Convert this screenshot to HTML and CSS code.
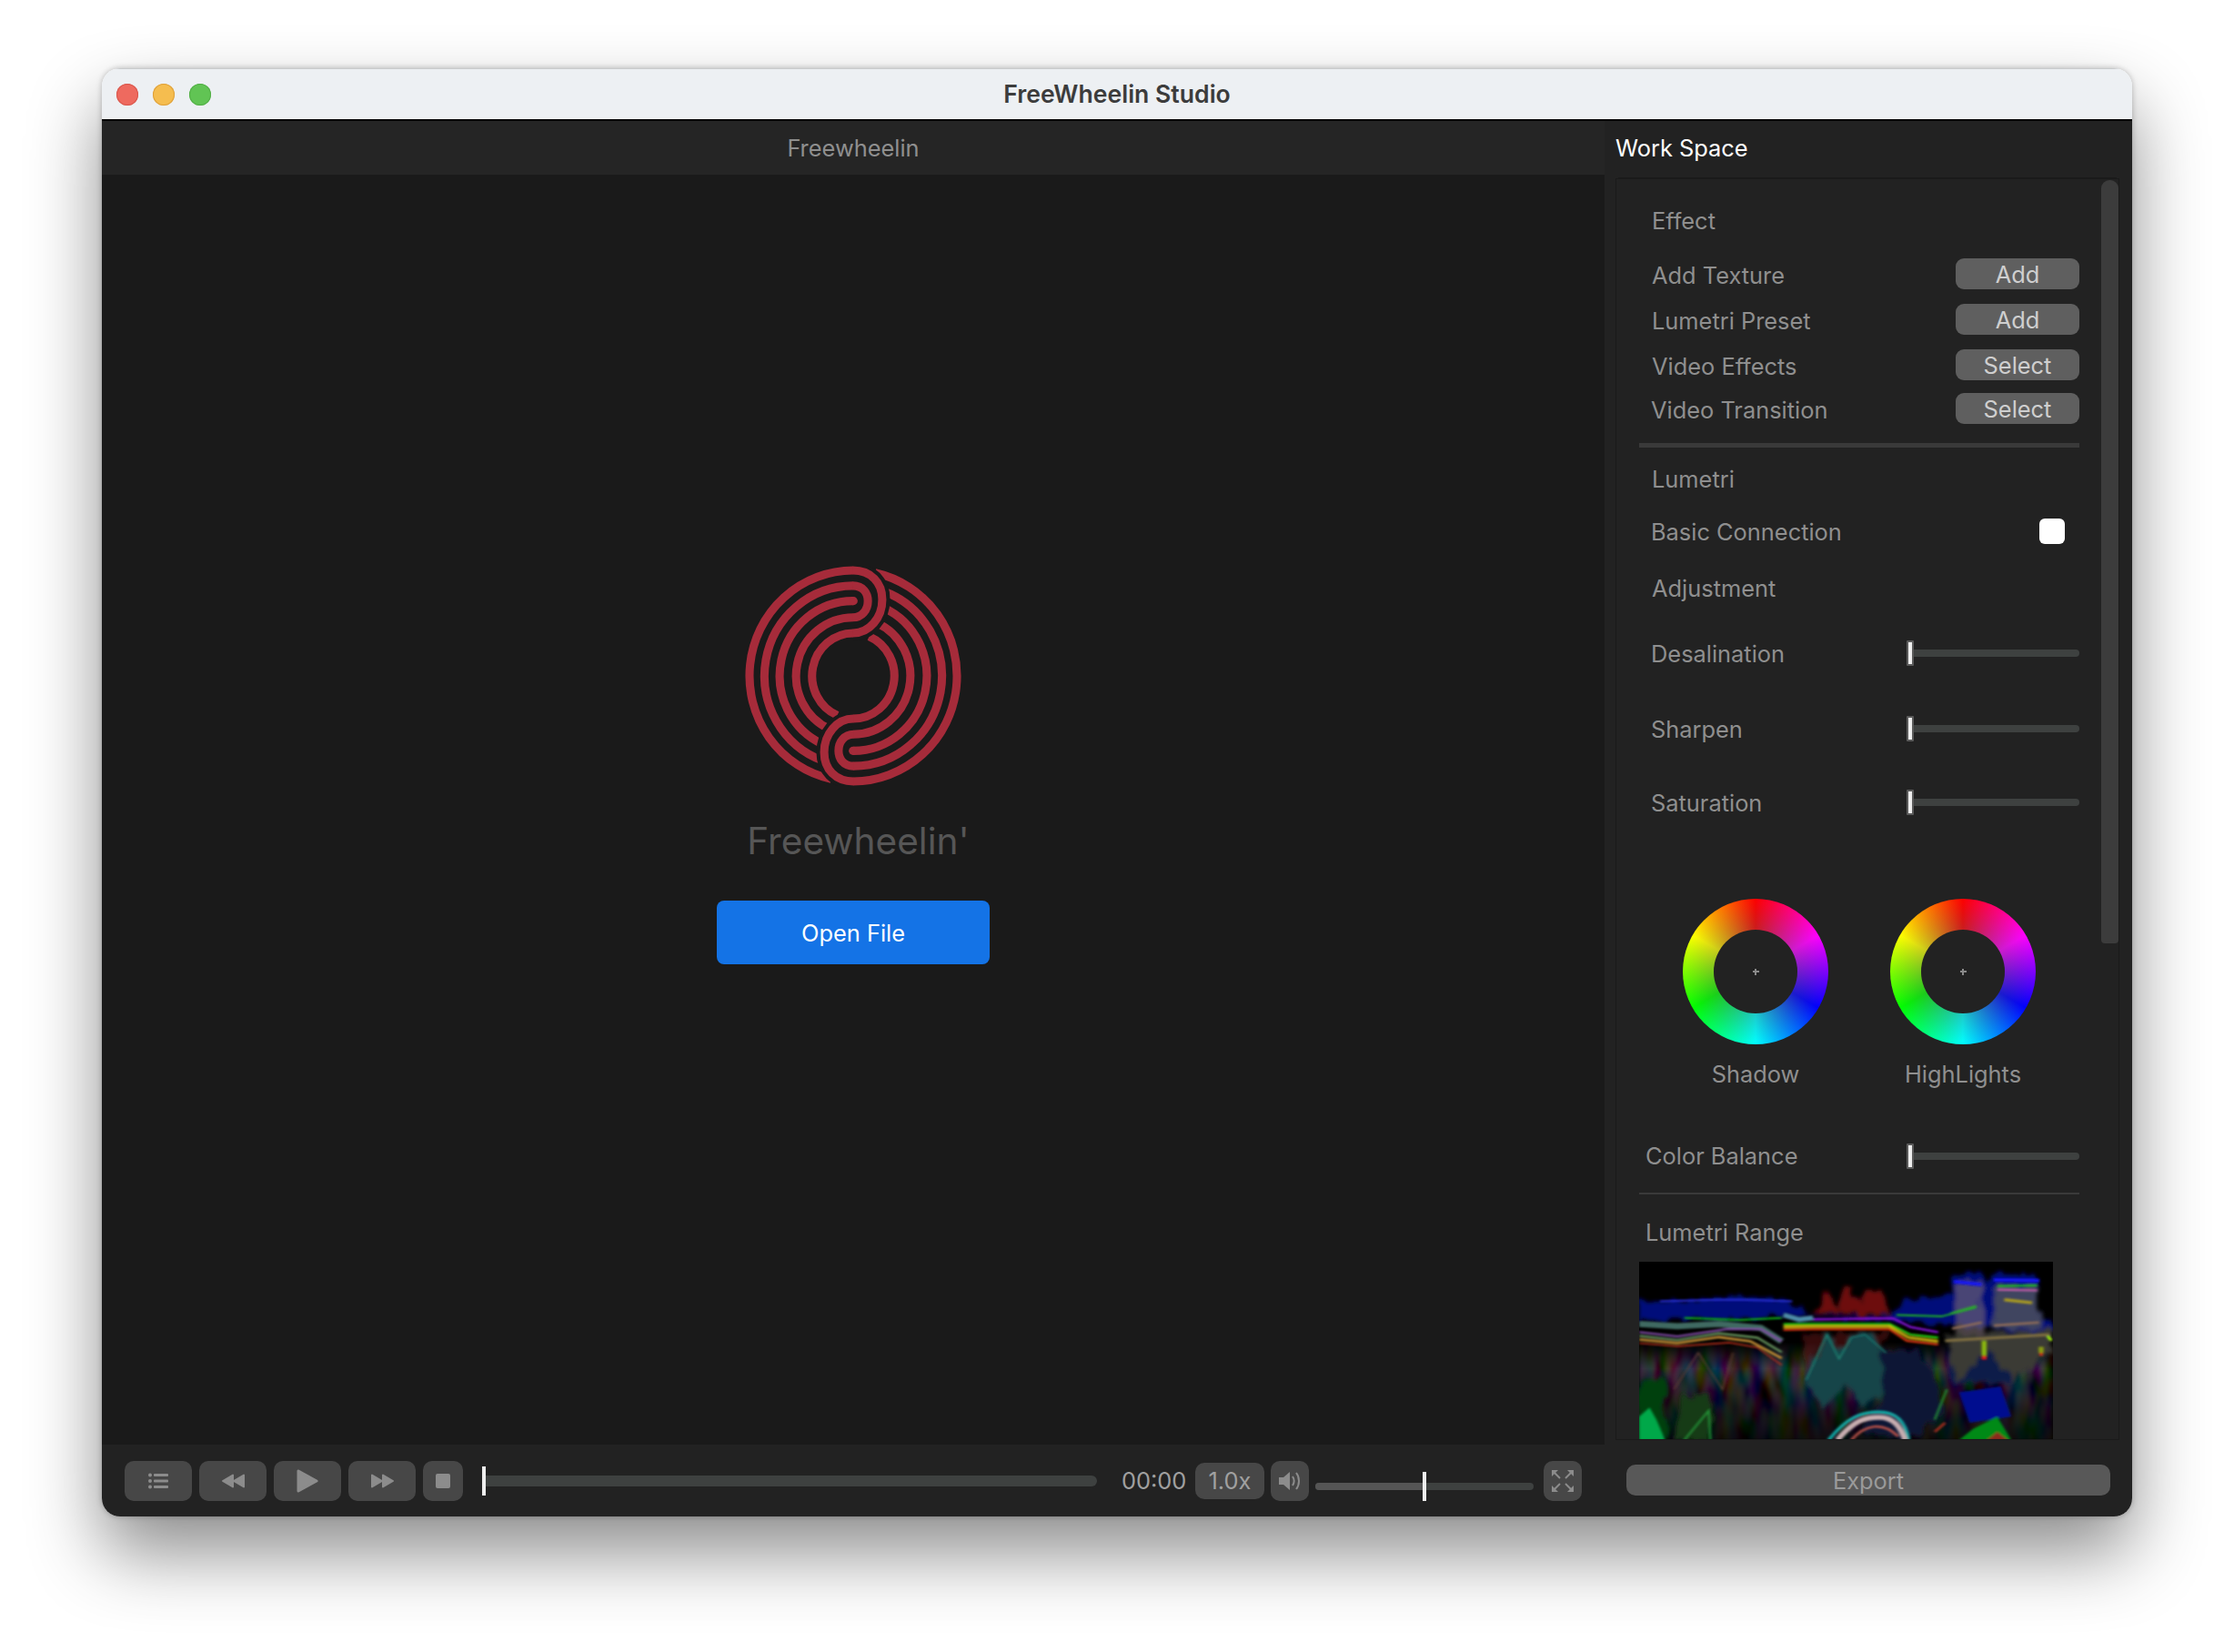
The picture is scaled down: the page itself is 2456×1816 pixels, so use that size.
FILE: index.html
```html
<!DOCTYPE html>
<html lang="en">
<head>
    <meta charset="UTF-8">
    <title>FreeWheelin Studio</title>
    <link rel="stylesheet" href="styles.css">
</head>
<body>
<div class="window">
    <div class="titlebar">
        <div class="lights">
            <span class="light red"></span>
            <span class="light yellow"></span>
            <span class="light green"></span>
        </div>
        <div class="title">FreeWheelin Studio</div>
    </div>
    <div class="columns">
        <div class="left">
            <div class="head head-center">Freewheelin</div>
            <div class="stage">
                <svg class="logo" viewBox="112 70 720 720">
                    <defs>
                        <g id="tails" class="ring">
                            <path d="M472 85A340 345 0 0 0 400 767"/>
                            <path d="M472 135A290 295 0 0 0 372 707"/>
                            <path d="M472 185A240 245 0 0 0 372 653"/>
                            <path d="M472 239A187 191 0 0 0 395 604"/>
                            <path d="M472 290A135 140 0 0 0 420 559"/>
                        </g>
                        <path id="halo" class="halo" d="M472 85C530 85 567 125 567 180C567 240 525 290 472 290"/>
                        <g id="heads" class="ring">
                            <path d="M471 85C530 85 567 125 567 180C567 240 525 290 471 290"/>
                            <path d="M471 135C505 135 520 160 520 185C520 215 500 239 471 239"/>
                            <path class="cap" d="M471 185L473 185"/>
                        </g>
                    </defs>
                    <use href="#tails"/>
                    <use href="#tails" transform="rotate(180 472 430)"/>
                    <use href="#halo"/>
                    <use href="#halo" transform="rotate(180 472 430)"/>
                    <use href="#heads"/>
                    <use href="#heads" transform="rotate(180 472 430)"/>
                </svg>
                <div class="brand">Freewheelin'</div>
                <button class="open-btn">Open File</button>
            </div>
            <div class="controls">
                <button class="ctl">
                    <svg width="22" height="18" viewBox="0 0 22 18">
                        <circle cx="2" cy="2.5" r="2"/><circle cx="2" cy="9" r="2"/><circle cx="2" cy="15.5" r="2"/>
                        <rect x="6" y="1" width="16" height="3" rx="1"/><rect x="6" y="7.5" width="16" height="3" rx="1"/><rect x="6" y="14" width="16" height="3" rx="1"/>
                    </svg>
                </button>
                <button class="ctl">
                    <svg width="25" height="16" viewBox="0 0 25 16">
                        <path d="M12 1.500V14.500L1 8Z" stroke-width="2" stroke-linejoin="round"/>
                        <path d="M24 1.500V14.500L13 8Z" stroke-width="2" stroke-linejoin="round"/>
                    </svg>
                </button>
                <button class="ctl">
                    <svg width="24" height="26" viewBox="0 0 24 26">
                        <path d="M2 2V24L22 13Z" stroke-width="3" stroke-linejoin="round"/>
                    </svg>
                </button>
                <button class="ctl">
                    <svg width="25" height="16" viewBox="0 0 25 16">
                        <path d="M1 1.500V14.500L12 8Z" stroke-width="2" stroke-linejoin="round"/>
                        <path d="M13 1.500V14.500L24 8Z" stroke-width="2" stroke-linejoin="round"/>
                    </svg>
                </button>
                <button class="ctl ctl-small">
                    <svg width="16" height="16" viewBox="0 0 16 16"><rect width="16" height="16" rx="2"/></svg>
                </button>
                <div class="progress"><span class="progress-knob"></span></div>
                <span class="time">00:00</span>
                <button class="speed">1.0x</button>
                <button class="ctl ctl-icon">
                    <svg width="26" height="24" viewBox="0 0 26 24">
                        <path d="M1 8H6L13 2V22L6 16H1Z"/>
                        <path class="wave" d="M16 7C18 10 18 14 16 17"/>
                        <path class="wave" d="M20 3C24 8 24 16 20 21"/>
                    </svg>
                </button>
                <div class="volume">
                    <span class="volume-fill"></span>
                    <span class="volume-knob"></span>
                </div>
                <button class="ctl ctl-icon ctl-full">
                    <svg width="24" height="24" viewBox="0 0 24 24">
                        <path d="M0 0H7L0 7Z"/><path class="arrow" d="M3 3L9 9"/>
                        <path d="M24 0H17L24 7Z"/><path class="arrow" d="M21 3L15 9"/>
                        <path d="M0 24H7L0 17Z"/><path class="arrow" d="M3 21L9 15"/>
                        <path d="M24 24H17L24 17Z"/><path class="arrow" d="M21 21L15 15"/>
                    </svg>
                </button>
            </div>
        </div>
        <div class="right">
            <div class="head head-work">Work Space</div>
            <div class="panel">
                <div class="panel-content">
                    <div class="label effect-title">Effect</div>
                    <div class="row row-1"><span class="label">Add Texture</span><button class="small-btn">Add</button></div>
                    <div class="row row-2"><span class="label">Lumetri Preset</span><button class="small-btn">Add</button></div>
                    <div class="row row-3"><span class="label">Video Effects</span><button class="small-btn">Select</button></div>
                    <div class="row row-4"><span class="label">Video Transition</span><button class="small-btn">Select</button></div>
                    <div class="divider"></div>
                    <div class="label lumetri-title">Lumetri</div>
                    <div class="row row-check"><span class="label">Basic Connection</span><span class="check"></span></div>
                    <div class="label adjust-title">Adjustment</div>
                    <div class="row slider-1"><span class="label">Desalination</span><div class="slider"><span class="slider-knob"></span></div></div>
                    <div class="row slider-2"><span class="label">Sharpen</span><div class="slider"><span class="slider-knob"></span></div></div>
                    <div class="row slider-3"><span class="label">Saturation</span><div class="slider"><span class="slider-knob"></span></div></div>
                    <div class="wheels">
                        <div class="wheel-item"><div class="wheel"><span class="wheel-hole"><span class="plus"></span></span></div><div class="wheel-name">Shadow</div></div>
                        <div class="wheel-item"><div class="wheel"><span class="wheel-hole"><span class="plus"></span></span></div><div class="wheel-name">HighLights</div></div>
                    </div>
                    <div class="row slider-4"><span class="label label-out">Color Balance</span><div class="slider"><span class="slider-knob"></span></div></div>
                    <div class="divider-thin"></div>
                    <div class="label label-out range-title">Lumetri Range</div>
                    <svg class="scope" viewBox="0 0 1190 587" preserveAspectRatio="none">
                        <defs>
                            <filter id="soft" x="-5%" y="-5%" width="110%" height="110%">
                                <feGaussianBlur stdDeviation="3.500"/>
                            </filter>
                            <filter id="softer" x="-5%" y="-5%" width="110%" height="110%">
                                <feTurbulence type="fractalNoise" baseFrequency="0.035 0.012" numOctaves="3" seed="9" result="n"/>
                                <feDisplacementMap in="SourceGraphic" in2="n" scale="50" xChannelSelector="R" yChannelSelector="G"/>
                                <feGaussianBlur stdDeviation="6"/>
                            </filter>
                            <filter id="grain" x="0" y="0" width="100%" height="100%">
                                <feTurbulence type="fractalNoise" baseFrequency="0.025 0.008" numOctaves="2" seed="21"/>
                                <feColorMatrix values="2.200 0 0 0 -.85  0 2.200 0 0 -.85  0 0 2.400 0 -.85  0 0 0 0 1"/>
                                <feGaussianBlur stdDeviation="4"/>
                            </filter>
                            <linearGradient id="grainFade" x1="0" y1="0" x2="0" y2="1">
                                <stop offset="0" stop-color="#000"/>
                                <stop offset=".45" stop-color="#000"/>
                                <stop offset=".6" stop-color="#fff"/>
                                <stop offset=".85" stop-color="#777"/>
                                <stop offset="1" stop-color="#444"/>
                            </linearGradient>
                            <mask id="grainMask"><rect width="1190" height="587" fill="url(#grainFade)"/></mask>
                        </defs>
                        <rect width="1190" height="587" fill="#000"/>
                        <g mask="url(#grainMask)"><rect width="1190" height="587" filter="url(#grain)" opacity=".32"/></g>
                        <g filter="url(#softer)">
                            <path fill="#000b7a" d="M0 125L60 125L130 125L300 120L430 115L470 160L490 180L730 180L760 125L890 105L900 45L980 40L1000 70L1020 40L1150 45L1150 190L1190 200L1190 240L1000 220L730 190L400 180L130 190L0 200Z"/>
                            <path fill="#6d0810" d="M505 170L540 90L570 160L590 100L605 70L625 130L650 90L700 95L725 175Z"/>
                            <path fill="#7a6a70" fill-opacity=".6" d="M905 70L985 70L985 240L905 240Z"/>
                            <path fill="#6a6a50" fill-opacity=".6" d="M1020 80L1150 80L1150 220L1020 220Z"/>
                            <path fill="#6a0d10" fill-opacity=".5" d="M470 240L720 230L700 300L620 340L540 340L480 360Z"/>
                            <path fill="#174448" d="M470 390L540 230L575 300L610 240L660 230L710 290L700 440L640 470L590 400L540 480Z"/>
                            <path fill="#0f1636" d="M700 300L800 290L860 400L880 500L780 587L640 560L700 440Z"/>
                            <path fill="#003f0d" d="M0 400L60 375L85 420L70 510L85 587L0 587Z"/>
                            <path fill="#133a18" d="M120 450L190 430L215 510L190 587L110 587Z"/>
                            <path fill="#0e1f48" d="M890 300L1000 270L1090 330L1150 300L1060 400L900 400Z"/>
                            <path fill="#3a3a35" d="M880 240L1180 225L1180 290L1080 400L1000 290L920 400Z"/>
                        </g>
                        <g filter="url(#soft)" fill="none" stroke-width="6">
                            <path fill="#00108f" d="M920 430L1040 410L1070 510L950 530Z"/>
                            <path fill="#058a12" d="M920 587L960 550L1030 510L1070 587Z"/>
                            <path fill="#8c2c1c" d="M1000 587L1030 560L1060 587Z"/>
                            <path fill="#00a84a" d="M0 510L30 480L50 520L75 587L0 587Z"/>
                            <path stroke="#0cb418" d="M130 185L290 192L410 185"/>
                            <path stroke="#1db321" d="M740 175L870 180L970 150"/>
                            <path stroke="#2b2fd8" d="M60 130L230 125L300 125L440 130"/>
                            <path stroke="#3f6a62" stroke-width="20" d="M0 205L110 212L230 205L350 218L410 262"/>
                            <path stroke="#7d48a0" stroke-width="7" d="M0 232L110 246L250 222L350 222L410 262"/>
                            <path stroke="#64905a" stroke-width="7" d="M0 244L110 258L230 236L340 250L410 298"/>
                            <path stroke="#c48f34" stroke-width="8" d="M0 256L110 268L230 248L320 262L410 318"/>
                            <path stroke="#b02c1a" stroke-width="5" d="M0 268L110 278L260 266L340 282L410 340"/>
                            <path stroke="#25d10d" stroke-width="7" d="M415 206L500 205L720 205L780 240L860 250"/>
                            <path stroke="#e6c810" stroke-width="7" d="M415 215L500 213L720 213L775 250L860 262"/>
                            <path stroke="#e03610" stroke-width="7" d="M415 224L500 222L720 222L770 260L860 272"/>
                            <path stroke="#7b10c8" stroke-width="8" d="M500 190L730 186L780 215L860 232"/>
                            <path stroke="#4d8ba8" stroke-width="16" d="M415 175L460 190L500 185"/>
                            <path stroke="#2fa532" d="M895 170L970 145"/>
                            <path stroke="#1212ee" stroke-width="12" d="M905 65L985 75M1020 60L1150 62"/>
                            <path stroke="#1fcc1f" d="M1030 80L1145 78"/>
                            <path stroke="#d060b0" d="M1030 92L1145 94"/>
                            <path stroke="#a89a20" stroke-width="10" d="M1050 125L1130 135"/>
                            <path stroke="#8c6a58" stroke-width="8" d="M900 220L985 200M1020 210L1150 200"/>
                            <path stroke="#7c6c40" stroke-width="10" d="M880 260L1180 240"/>
                            <path stroke="#8cb910" stroke-width="14" d="M992 260L992 310"/>
                            <path stroke="#e61a12" stroke-width="14" d="M992 310L992 322"/>
                            <path stroke="#8c9d10" stroke-width="14" d="M1156 280L1156 300"/>
                            <path stroke="#d63212" stroke-width="10" d="M1156 300L1156 310"/>
                            <path stroke="#a5ff00" stroke-width="8" d="M1175 245L1185 260"/>
                            <path stroke="#12a9a5" stroke-width="10" d="M545 587C600 510 640 495 690 495C735 495 765 520 775 587"/>
                            <path stroke="#c8aeb0" stroke-width="16" d="M570 587C620 520 650 512 690 512C730 512 750 540 765 587"/>
                            <path stroke="#b45046" stroke-width="8" d="M610 587C650 535 700 525 745 575"/>
                            <path stroke="#1f7f70" stroke-width="5" d="M480 390L540 240L575 320L610 250"/>
                            <path stroke="#17706a" stroke-width="5" d="M610 250L650 240L710 300"/>
                            <path stroke="#238f36" stroke-width="6" d="M130 587L200 490L205 587M850 520L885 420"/>
                            <path stroke="#a02a1a" stroke-width="8" d="M850 560L880 530"/>
                            <path stroke="#5d3a34" stroke-width="4" d="M100 420L170 300L240 420L270 300"/>
                        </g>
                    </svg>
                </div>
                <div class="scroll-track"><div class="scroll-thumb"></div></div>
            </div>
            <div class="export-row"><button class="export-btn">Export</button></div>
        </div>
    </div>
</div>
</body>
</html>
```

FILE: styles.css
```css
* {
    margin: 0;
    padding: 0;
    box-sizing: border-box;
}

html, body {
    width: 2456px;
    height: 1816px;
    overflow: hidden;
    background: #fff;
}

body {
    padding: 75px 0 0 112px;
    font-family: Inter, "Liberation Sans", sans-serif;
    font-size: 25.4px;
    color: #8f8f8f;
}

button {
    border: 0;
    font-family: inherit;
}

.window {
    width: 2232px;
    height: 1592px;
    display: flex;
    flex-direction: column;
    border-radius: 20px;
    overflow: hidden;
    box-shadow: 0 40px 80px rgba(0, 0, 0, .45), 0 0 6px rgba(0, 0, 0, .25);
}

.titlebar {
    height: 58px;
    flex: none;
    display: flex;
    align-items: center;
    position: relative;
    background: #edf0f3;
    border-top: 1px solid #c9cbcd;
    border-bottom: 2px solid #000;
}

.lights {
    display: flex;
    gap: 16px;
    padding-left: 16px;
}

.light {
    width: 24px;
    height: 24px;
    border-radius: 50%;
}

.red { background: #ee6a5f; box-shadow: inset 0 0 0 1px #d8574c; }
.yellow { background: #f5bd4f; box-shadow: inset 0 0 0 1px #dea03a; }
.green { background: #61c454; box-shadow: inset 0 0 0 1px #52ae46; }

.title {
    position: absolute;
    left: 0;
    right: 0;
    margin-top: -2px;
    text-align: center;
    font-weight: 600;
    font-size: 26.600px;
    color: #3c3c3c;
}

.columns {
    flex: 1;
    display: flex;
    min-height: 0;
}

.left {
    width: 1652px;
    display: flex;
    flex-direction: column;
}

.right {
    width: 580px;
    display: flex;
    flex-direction: column;
    background: #222;
}

.head {
    height: 59px;
    flex: none;
    display: flex;
    align-items: center;
    background: #252525;
}

.head-center {
    justify-content: center;
}

.head-work {
    padding-left: 12px;
    color: #fff;
    background: #222;
}

/* middle of the player */
.stage {
    flex: 1;
    display: flex;
    flex-direction: column;
    align-items: center;
    padding-top: 430px;
    background: #1a1a1a;
}

.logo {
    width: 242px;
    height: 242px;
}

.ring {
    fill: none;
    stroke: #a62b3a;
    stroke-width: 27;
}

.cap {
    stroke-linecap: round;
}

.halo {
    fill: none;
    stroke: #1a1a1a;
    stroke-width: 51;
}

.brand {
    margin-top: 34px;
    padding-left: 11px;
    font-size: 40.600px;
    line-height: 54px;
    color: #565656;
}

.open-btn {
    width: 300px;
    height: 70px;
    margin-top: 38px;
    border-radius: 8px;
    background: #1473e6;
    color: #fff;
    font-size: 25.4px;
}

/* bottom bar */
.controls {
    height: 79px;
    flex: none;
    display: flex;
    align-items: center;
    padding: 0 0 0 25px;
    background: #222;
}

.ctl {
    width: 74px;
    height: 44px;
    margin-right: 8px;
    flex: none;
    display: flex;
    align-items: center;
    justify-content: center;
    border-radius: 10px;
    background: #474747;
}

.ctl svg {
    fill: #8c8c8c;
    stroke: #8c8c8c;
    stroke-width: 0;
}

.ctl-small {
    width: 44px;
}

.ctl-icon {
    width: 42px;
    margin-right: 0;
    margin-left: 7px;
}

.ctl-full {
    margin-left: 11px;
}

.ctl svg .wave, .ctl svg .arrow {
    fill: none;
    stroke-width: 2;
}

.progress {
    width: 676px;
    height: 12px;
    margin-left: 13px;
    position: relative;
    border-radius: 0 6px 6px 0;
    background: #3e4140;
}

.progress-knob {
    position: absolute;
    left: 0;
    top: -10px;
    width: 4px;
    height: 32px;
    background: #eee;
}

.time {
    margin-left: 27px;
    width: 70px;
    white-space: nowrap;
    color: #a0a0a0;
}

.speed {
    width: 76px;
    height: 40px;
    margin-left: 11px;
    border-radius: 10px;
    background: #474747;
    color: #a0a0a0;
    font-size: 25.4px;
}

.volume {
    width: 240px;
    height: 8px;
    margin: 13px 0 0 7px;
    position: relative;
    border-radius: 4px;
    background: #3e4140;
}

.volume-fill {
    position: absolute;
    left: 0;
    top: 0;
    width: 120px;
    height: 8px;
    border-radius: 4px 0 0 4px;
    background: #555;
}

.volume-knob {
    position: absolute;
    left: 118px;
    top: -12px;
    width: 4px;
    height: 32px;
    background: #eee;
}

/* right side */
.panel {
    height: 1387px;
    margin: 4px 14px 0 12px;
    flex: none;
    display: flex;
    border: 1px solid #1a1a1a;
    box-shadow: 0 -4px 0 -3px #1a1a1a;
}

.panel-content {
    width: 533px;
    height: 1385px;
    flex: none;
    padding: 0 24px 0 25px;
    overflow: hidden;
}

.scroll-track {
    flex: 1;
}

.scroll-thumb {
    height: 839px;
    margin-top: 1px;
    border-radius: 9px 9px 4px 4px;
    background: #3c3c3c;
}

.label {
    display: block;
    height: 34px;
    padding-left: 14px;
    line-height: 34px;
    white-space: nowrap;
}

.label-out {
    padding-left: 7px;
}

.row {
    display: flex;
    justify-content: space-between;
    align-items: center;
}

.row-1, .row-2, .row-3, .row-4 {
    height: 34px;
}

.row-1 .label, .row-2 .label, .row-3 .label {
    margin-top: 4px;
}

.row-4 .label {
    margin-top: 3px;
    padding-left: 13px;
}

.effect-title { margin-top: 29px; }
.row-1 { margin-top: 24px; }
.row-2, .row-3 { margin-top: 16px; }
.row-4 { margin-top: 14px; }

.small-btn {
    width: 136px;
    height: 34px;
    border-radius: 9px;
    background: #5f5f5f;
    color: #cfcfcf;
    font-size: 25.4px;
}

.divider {
    height: 5px;
    margin-top: 21px;
    background: #3a3a3a;
}

.lumetri-title { margin-top: 18px; }

.row-check {
    height: 28px;
    margin-top: 26px;
    padding-right: 16px;
}

.row-check .label {
    margin-top: 2px;
    padding-left: 13px;
}

.check {
    width: 28px;
    height: 28px;
    border-radius: 6px;
    background: #fff;
}

.adjust-title { margin-top: 32px; }

.slider-1, .slider-2, .slider-3, .slider-4 {
    height: 28px;
}

.slider-1 .label, .slider-3 .label {
    margin-top: 2px;
    padding-left: 13px;
}

.slider-2 .label {
    margin-top: 1px;
    padding-left: 13px;
}

.slider-1 { margin-top: 40px; }
.slider-2 { margin-top: 55px; }
.slider-3 { margin-top: 53px; }
.slider-4 { margin-top: 59px; }

.slider {
    width: 189px;
    height: 8px;
    position: relative;
    border-radius: 4px;
    background: #3e4140;
}

.slider-knob {
    position: absolute;
    left: -1px;
    top: -10px;
    width: 8px;
    height: 28px;
    border: 2px solid #5a5a5a;
    border-radius: 1px;
    background: #eee;
}

.wheels {
    display: flex;
    gap: 68px;
    margin: 92px 0 0 48px;
}

.wheel-item {
    width: 160px;
    text-align: center;
}

.wheel {
    width: 160px;
    height: 160px;
    display: flex;
    align-items: center;
    justify-content: center;
    border-radius: 50%;
    background:
        radial-gradient(circle closest-side, rgba(90, 90, 90, .35) 55%, rgba(90, 90, 90, 0) 100%),
        conic-gradient(#f00, #f0f, #00f, #0ff, #0f0, #ff0, #f00);
}

.wheel-hole {
    width: 92px;
    height: 92px;
    display: flex;
    align-items: center;
    justify-content: center;
    border-radius: 50%;
    background: #222;
}

.plus {
    width: 7px;
    height: 7px;
    background:
        linear-gradient(#8a8a8a, #8a8a8a) center / 7px 2px no-repeat,
        linear-gradient(#8a8a8a, #8a8a8a) center / 2px 7px no-repeat;
}

.wheel-name {
    height: 34px;
    margin-top: 16px;
    line-height: 34px;
    white-space: nowrap;
}

.divider-thin {
    height: 2px;
    margin-top: 26px;
    background: #3a3a3a;
}

.range-title { margin-top: 25px; }

.scope {
    display: block;
    width: 455px;
    height: 196px;
    margin-top: 15px;
}

.export-row {
    flex: 1;
    padding: 27px 24px 0 24px;
}

.export-btn {
    display: block;
    width: 532px;
    height: 34px;
    border-radius: 10px;
    background: #585858;
    color: #9a9a9a;
    font-size: 25.4px;
}
```
